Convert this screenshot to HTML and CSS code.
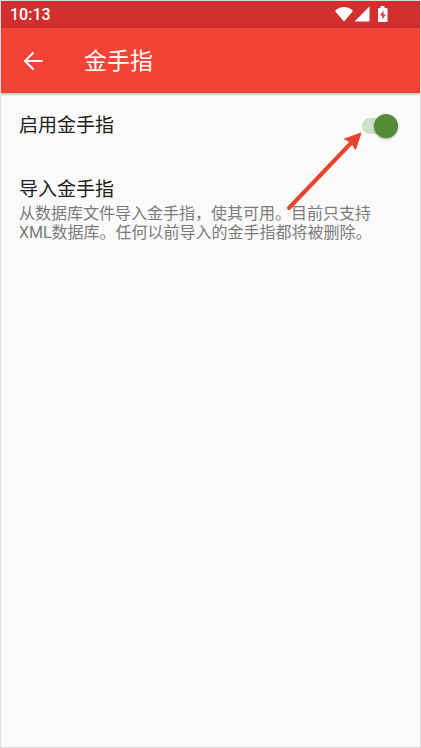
FILE: index.html
```html
<!DOCTYPE html>
<html lang="zh-CN">

<head>
    <meta charset="UTF-8" />
    <meta name="viewport" content="width=device-width, initial-scale=1.0" />
    <title>金手指</title>
    <link rel="stylesheet" href="styles.css">
</head>

<body>

    <div class="status-bar">
        <span class="clock">10:13</span>
        <svg class="status-icons" width="54" height="18" viewBox="0 0 54 18" aria-hidden="true">
            <path d="M0 5C5-.2 13-.2 18 5L9 15.500z" />
            <path d="M19.500 15.500 34.500.5v15z" />
            <path fill-rule="evenodd" d="M45.500 0h4v2h2q1 0 1 1v12q0 1-1 1h-7.500q-1 0-1-1V3q0-1 1-1h1.500zM48.500 4.500 45 9.500h2.300V13.500l3.500-5h-2.300z" />
        </svg>
    </div>

    <header class="toolbar">
        <button class="back" type="button" aria-label="返回">
            <svg width="20" height="20" viewBox="0 0 20 20" aria-hidden="true">
                <path d="M19.500 10H2.500M10.500 1.500 2 10l8.500 8.500" />
            </svg>
        </button>
        <h1>金手指</h1>
    </header>

    <main class="settings">
        <label class="setting setting-toggle" for="enable-cheats">
            <span class="setting-title">启用金手指</span>
            <span class="switch">
                <input type="checkbox" id="enable-cheats" checked />
                <svg class="pointer" width="80" height="84" viewBox="0 0 80 84" aria-hidden="true">
                    <path class="pointer-line" d="M4 79 68 12" />
                    <path class="pointer-head" d="M76 4 59.500 10 66 13.500 70.500 20.500z" />
                </svg>
            </span>
        </label>

        <button class="setting setting-import" type="button">
            <span class="setting-title">导入金手指</span>
            <span class="setting-summary">从数据库文件导入金手指，使其可用。目前只支持<br />XML数据库。任何以前导入的金手指都将被删除。</span>
        </button>
    </main>

</body>

</html>
```

FILE: styles.css
```css
* {
    box-sizing: border-box;
}

body {
    margin: 0;
    min-height: 100vh;
    border: 1px solid #dcdcdc;
    background: #fafafa;
    color: #212121;
    font-family: Roboto, "Noto Sans CJK SC", sans-serif;
}

button {
    border: none;
    background: none;
    padding: 0;
    color: inherit;
    font-family: inherit;
    text-align: left;
    cursor: pointer;
}

.status-bar {
    display: flex;
    justify-content: space-between;
    align-items: center;
    height: 27px;
    padding: 0 31px 0 9px;
    background: #d32f2f;
    color: #fff;
}

.clock {
    font-size: 16px;
    font-weight: 500;
}

.status-icons {
    fill: #fff;
}

.toolbar {
    display: flex;
    align-items: center;
    gap: 41px;
    height: 65px;
    padding: 0 22px;
    background: #f44336;
    color: #fff;
    box-shadow: 0 1px 3px rgba(0, 0, 0, 0.35);
}

.toolbar h1 {
    margin: 0;
    padding-top: 2px;
    font-size: 23px;
    font-weight: 400;
    line-height: 32px;
}

.back {
    display: flex;
}

.back svg {
    fill: none;
    stroke: #fff;
    stroke-width: 2;
}

.settings {
    display: flex;
    flex-direction: column;
}

.setting {
    display: flex;
    padding: 0 18px;
}

.setting-toggle {
    justify-content: space-between;
    align-items: center;
    height: 66px;
    padding-right: 22px;
    cursor: pointer;
}

.setting-import {
    flex-direction: column;
    padding-top: 17px;
    padding-bottom: 17px;
}

.setting-title {
    font-size: 19px;
    line-height: 28px;
}

.setting-summary {
    color: #7b7b7b;
    font-size: 16px;
    line-height: 19px;
}

.switch {
    position: relative;
    display: flex;
}

.switch input {
    appearance: none;
    display: flex;
    justify-content: flex-end;
    align-items: center;
    width: 36px;
    height: 16px;
    margin: 0;
    border-radius: 8px;
    background: #cfdfc8;
    cursor: pointer;
}

.switch input::before {
    content: "";
    width: 24px;
    height: 24px;
    border-radius: 50%;
    background: #558b37;
    box-shadow: 0 1px 2px rgba(0, 0, 0, 0.35);
}

.switch input:not(:checked) {
    justify-content: flex-start;
}

/* arrow pointing at the switch, drawn over the rows below */
.pointer {
    position: absolute;
    top: 11px;
    right: 33px;
    pointer-events: none;
}

.pointer-line {
    fill: none;
    stroke: #e8432d;
    stroke-width: 4;
    stroke-linecap: round;
}

.pointer-head {
    fill: #e8432d;
    stroke: #e8432d;
    stroke-linejoin: round;
}
```
